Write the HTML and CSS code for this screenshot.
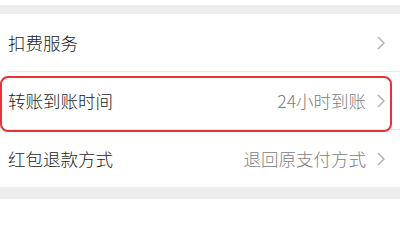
FILE: index.html
```html
<!DOCTYPE html>
<html lang="zh-CN">
<head>
<meta charset="utf-8">
<link rel="stylesheet" href="styles.css">
</head>
<body>
<div class="page">
  <div class="gap-top"></div>
  <div class="list">
    <div class="row">
      <div class="row-inner">
        <span class="label">扣费服务</span>
        <span class="right">
          <svg class="chev" width="8" height="14" viewBox="0 0 8 14"><polyline points="1,1 7,7 1,13" fill="none" stroke="#b3b3b3" stroke-width="1.5"/></svg>
        </span>
      </div>
    </div>
    <div class="row">
      <div class="row-inner">
        <span class="label">转账到账时间</span>
        <span class="right">
          <span class="value">24小时到账</span>
          <svg class="chev" width="8" height="14" viewBox="0 0 8 14"><polyline points="1,1 7,7 1,13" fill="none" stroke="#b3b3b3" stroke-width="1.5"/></svg>
        </span>
      </div>
    </div>
    <div class="row last">
      <div class="row-inner">
        <span class="label">红包退款方式</span>
        <span class="right">
          <span class="value">退回原支付方式</span>
          <svg class="chev" width="8" height="14" viewBox="0 0 8 14"><polyline points="1,1 7,7 1,13" fill="none" stroke="#b3b3b3" stroke-width="1.5"/></svg>
        </span>
      </div>
    </div>
    <div class="highlight"></div>
  </div>
  <div class="gap-bottom"></div>
</div>
</body>
</html>
```
FILE: styles.css
```css
html, body {
  margin: 0;
  padding: 0;
  background: #ffffff;
}
body {
  font-family: "Noto Sans CJK SC", "Noto Sans", sans-serif;
  width: 400px;
  height: 200px;
  overflow: hidden;
}
.page {
  display: flex;
  flex-direction: column;
  padding-top: 5px;
}
.gap-top {
  height: 9px;
  background: #ededed;
}
.list {
  position: relative;
  background: #ffffff;
}
.row {
  padding-left: 8px;
}
.row-inner {
  height: 57px;
  display: flex;
  align-items: center;
  justify-content: space-between;
  padding-right: 15px;
  border-bottom: 1px solid #e9e9e9;
}
.row.last .row-inner {
  border-bottom: none;
}
.label {
  font-size: 17.5px;
  font-weight: 300;
  color: #1a1a1a;
}
.right {
  display: flex;
  align-items: center;
  gap: 11px;
}
.value {
  font-size: 17.5px;
  font-weight: 300;
  color: #808080;
}
.chev {
  display: block;
}
.highlight {
  position: absolute;
  left: 0;
  top: 62px;
  width: 388px;
  height: 52px;
  border: 2px solid #e8323a;
  border-radius: 8px;
}
.gap-bottom {
  height: 12px;
  background: #ededed;
}
```
